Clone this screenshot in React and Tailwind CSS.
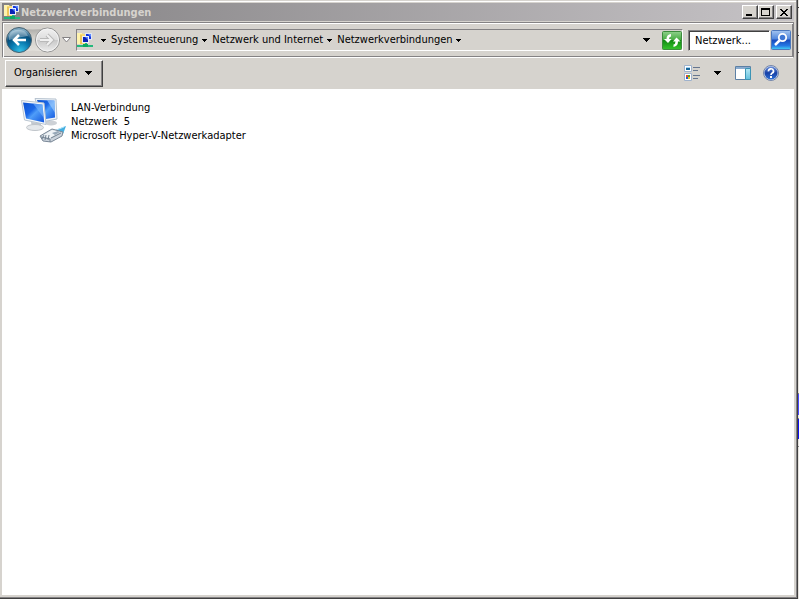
import { useState } from 'react';

const crumbs = ['Systemsteuerung', 'Netzwerk und Internet', 'Netzwerkverbindungen'];

const connections = [
  { name: 'LAN-Verbindung', network: 'Netzwerk  5', adapter: 'Microsoft Hyper-V-Netzwerkadapter' },
];

const SmallArrow = () => (
  <svg width="5" height="3" viewBox="0 0 5 3" shapeRendering="crispEdges" aria-hidden="true">
    <path d="M0 0h5v1H0zM1 1h3v1H1zM2 2h1v1H2z" />
  </svg>
);

const BigArrow = () => (
  <svg width="7" height="4" viewBox="0 0 7 4" shapeRendering="crispEdges" aria-hidden="true">
    <path d="M0 0h7v1H0zM1 1h5v1H1zM2 2h3v1H2zM3 3h1v1H3z" />
  </svg>
);

const NetworkFolderIcon = () => (
  <svg width="16" height="16" viewBox="0 0 16 16" className="shrink-0" aria-hidden="true">
    <path d="M0 1h5l1 1h3v10H0z" fill="#f8dc78" />
    <path d="M0 1h5v1H3v10H0z" fill="#fff3ae" />
    <path d="M3 3h2v9H3z" fill="#efc85a" />
    <path d="M8 1h7v7H8z" fill="#dfe6f7" />
    <path d="M9 2h5v5H9z" fill="#1636d8" />
    <path d="M5 4h7v7H5z" fill="#e8edfa" />
    <path d="M6 5h5v5H6z" fill="#0b22b4" />
    <path d="M8 5h3v3z" fill="#4f7dff" />
    <path d="M11 2h3v3z" fill="#5e8bff" />
    <path d="M8 11h2v2h6v2H0v-2h8z" fill="#25b87c" />
    <path d="M6 12h5v3H6z" fill="#0ca864" />
  </svg>
);

const NavButtonsBackdrop = () => (
  <svg width="56" height="28" viewBox="0 0 56 28" aria-hidden="true">
    <defs>
      <linearGradient id="plate" x2="0" y2="1">
        <stop stopColor="#aaa9a6" />
        <stop offset="0.4" stopColor="#d2d0ca" />
        <stop offset="1" stopColor="#e4e2dd" />
      </linearGradient>
      <radialGradient id="back" cx="0.55" cy="0.95" r="0.85">
        <stop stopColor="#36c2e8" />
        <stop offset="0.45" stopColor="#087ab0" />
        <stop offset="0.75" stopColor="#064e7c" />
        <stop offset="1" stopColor="#80abc4" />
      </radialGradient>
      <linearGradient id="forward" x2="0" y2="1">
        <stop stopColor="#f1f1f1" />
        <stop offset="0.48" stopColor="#dddddd" />
        <stop offset="0.52" stopColor="#c9c9c9" />
        <stop offset="1" stopColor="#ededed" />
      </linearGradient>
    </defs>
    <path d="M13 2q15 3 29 0a12 12 0 0 1 0 24q-14-3-29 0z" fill="url(#plate)" />
    <circle cx="14" cy="14" r="12.500" fill="url(#back)" stroke="#45606f" />
    <path d="M4 10a10 9 0 0 1 19 0q-9 1-19 4z" fill="#fff" opacity="0.35" />
    <path d="M21 14H9M14 9l-5 5 5 5" fill="none" stroke="#fff" strokeWidth="2.500" />
    <circle cx="42.500" cy="14" r="12" fill="url(#forward)" stroke="#929292" />
    <circle cx="42.500" cy="14" r="11" fill="none" stroke="#f4f4f4" />
    <path d="M35 14h12M42 9l5 5-5 5" fill="none" stroke="#b9b9b9" strokeWidth="4" />
    <path d="M35 14h12M42 9l5 5-5 5" fill="none" stroke="#f0f0f0" strokeWidth="2" />
  </svg>
);

const RefreshIcon = () => (
  <svg width="20" height="19" viewBox="0 0 20 19" aria-hidden="true">
    <defs>
      <linearGradient id="green" x2="0" y2="1">
        <stop stopColor="#8fd08b" />
        <stop offset="0.45" stopColor="#48ad43" />
        <stop offset="0.5" stopColor="#128b13" />
        <stop offset="1" stopColor="#35c52c" />
      </linearGradient>
    </defs>
    <rect x="0.500" y="0.500" width="19" height="18" rx="1" fill="url(#green)" stroke="#3c8b3d" />
    <path d="M9 3v2.500Q7 5.500 7 8h2.500L6 12 2 8h2.500Q4.500 3.500 9 3z" fill="#fff" />
    <path d="M11.500 16v-2.500q2-.5 2-3H11L14.500 6.500l4 4H16q0 4.500-4.500 5.500z" fill="#fff" />
  </svg>
);

const SearchIcon = () => (
  <svg width="20" height="20" viewBox="0 0 20 20" aria-hidden="true">
    <defs>
      <linearGradient id="blue" x2="0" y2="1">
        <stop stopColor="#a5c5f0" />
        <stop offset="0.45" stopColor="#4f86dc" />
        <stop offset="0.5" stopColor="#1749bb" />
        <stop offset="0.8" stopColor="#2478e4" />
        <stop offset="1" stopColor="#45d5f5" />
      </linearGradient>
    </defs>
    <rect x="0.500" y="0.500" width="19" height="19" rx="1" fill="url(#blue)" stroke="#4c78bd" />
    <path d="M8.500 10.500L4 15" stroke="#fff" strokeWidth="2.500" />
    <circle cx="11.500" cy="7.500" r="3.700" fill="#3f77d4" stroke="#fff" strokeWidth="1.800" />
  </svg>
);

const ViewsIcon = () => (
  <svg width="16" height="16" viewBox="0 0 16 16" aria-hidden="true">
    <path d="M.5.5h7v6h-7zM.5 8.500h7v7h-7z" fill="#fff" stroke="#9fb2cc" />
    <path d="M2 2h4v1H2z" fill="#a7d4f3" />
    <path d="M2 3h4v2H2z" fill="#17679b" />
    <path d="M2 10h2v2H2z" fill="#e34d28" />
    <path d="M4 10h2v2H4z" fill="#43a63c" />
    <path d="M2 12h2v2H2z" fill="#2b58cf" />
    <path d="M4 12h2v2H4z" fill="#f2c21e" />
    <path d="M9 2h7v1H9zM9 5h5v1H9zM9 10h7v1H9zM9 13h5v1H9z" fill="#65758f" />
  </svg>
);

const PreviewPaneIcon = () => (
  <svg width="16" height="14" viewBox="0 0 16 14" aria-hidden="true">
    <defs>
      <linearGradient id="pane" x2="0" y2="1">
        <stop stopColor="#b6e9f6" />
        <stop offset="1" stopColor="#62bfdd" />
      </linearGradient>
    </defs>
    <path d="M.5.5h15v13H.5z" fill="#fff" stroke="#5d80a5" />
    <path d="M1 1h14v2H1z" fill="#8aabcf" />
    <path d="M10.500 2.500h5v11h-5z" fill="url(#pane)" stroke="#3c94b5" />
  </svg>
);

const HelpIcon = () => (
  <svg width="16" height="16" viewBox="0 0 16 16" aria-hidden="true">
    <defs>
      <linearGradient id="help" x2="0" y2="1">
        <stop stopColor="#6e92dc" />
        <stop offset="0.5" stopColor="#1740a6" />
        <stop offset="1" stopColor="#2d70d6" />
      </linearGradient>
    </defs>
    <circle cx="8" cy="8" r="7.500" fill="#c8d4ea" stroke="#7385a9" />
    <circle cx="8" cy="8" r="6.500" fill="url(#help)" />
    <path d="M5.500 6.300a2.500 2.300 0 1 1 3.700 1.800q-1.200.7-1.200 1.900" fill="none" stroke="#fff" strokeWidth="1.700" />
    <path d="M7 11h2v2H7z" fill="#fff" />
  </svg>
);

const ConnectionIcon = () => (
  <svg width="46" height="46" viewBox="0 0 46 46" className="shrink-0" aria-hidden="true">
    <defs>
      <linearGradient id="screen" x2="1" y2="1">
        <stop stopColor="#0b51d0" />
        <stop offset="0.4" stopColor="#1b68e8" />
        <stop offset="0.55" stopColor="#4f9df8" />
        <stop offset="1" stopColor="#1256df" />
      </linearGradient>
    </defs>
    <ellipse cx="30" cy="25" rx="6" ry="2.500" fill="#cdd1d6" />
    <path d="M14 .5L35 1l1 20-15 3z" fill="#eef3f8" stroke="#b6c2cf" />
    <path d="M16 2l17.500.500.500 17-12 2z" fill="url(#screen)" />
    <path d="M26 2.300l7.500.200.300 12z" fill="#9ccafc" opacity="0.7" />
    <path d="M10 24l10 1v5h-9z" fill="#c1c7ce" />
    <ellipse cx="14" cy="29.500" rx="8.500" ry="3" fill="#e5e8eb" stroke="#c0c5ca" />
    <path d="M.5 2.500L23 5l2 21.500L3.500 22z" fill="#f5f8fb" stroke="#b9c5d1" />
    <path d="M2 4.500L21.500 6.500l1.700 18L5 20.500z" fill="url(#screen)" />
    <path d="M12 5.500l9.500 1 1 13z" fill="#79b5fb" opacity="0.6" />
    <path d="M32 33l13-5-3 8-8 3z" fill="#43aee0" />
    <path d="M33 33l10-4" stroke="#b5e4f7" />
    <path d="M19 38l12-7 11 3-1 4-11 6-8-1z" fill="#cbd3dc" stroke="#7a8897" />
    <path d="M21 38l10-6 8 2-10 6z" fill="#eff3f6" />
    <path d="M20 39l9 2v3M23 37l-2 4M25 37l-1 5M28 37l-1 5M30 40l10-5" fill="none" stroke="#758493" />
    <path d="M31 35l6-2 2 1-5 3z" fill="#97a8b8" />
  </svg>
);

function WindowButton({ label, children }) {
  return (
    <button aria-label={label} className="flex h-[14px] w-4 items-center justify-center border border-t-white border-l-white border-r-[#404040] border-b-[#404040] bg-[#d6d3ce] shadow-[inset_-1px_-1px_0_#848284]">
      <svg width="10" height="9" viewBox="0 0 10 9" shapeRendering="crispEdges" aria-hidden="true">{children}</svg>
    </button>
  );
}

function TitleBar() {
  return (
    <header className="flex h-[18px] items-center bg-linear-to-r from-[#848284] to-[#c6c3c6] pr-0.5 pl-0.5">
      <NetworkFolderIcon />
      <h1 className="ml-px flex-1 truncate pt-0.5 text-[11px] font-bold text-[#d6d3ce]">Netzwerkverbindungen</h1>
      <div className="flex">
        <WindowButton label="Minimieren"><path d="M1 6h6v2H1z" /></WindowButton>
        <WindowButton label="Maximieren"><path d="M0 0h9v8H0zM1 2v5h7V2z" fillRule="evenodd" /></WindowButton>
        <div className="ml-0.5 flex">
          <WindowButton label="Schließen">
            <path d="M1 1h2v1H1zM7 1h2v1H7zM2 2h2v1H2zM6 2h2v1H6zM3 3h4v1H3zM4 4h2v1H4zM3 5h4v1H3zM2 6h2v1H2zM6 6h2v1H6zM1 7h2v1H1zM7 7h2v1H7z" />
          </WindowButton>
        </div>
      </div>
    </header>
  );
}

function AddressBar() {
  const [query, setQuery] = useState('Netzwerk...');

  return (
    <div className="mt-px flex h-9 items-center border border-[#848284] border-b-white pr-0.5 pl-0.5 shadow-[inset_1px_1px_0_#fff,inset_-1px_-1px_0_#848284]">
      <div className="relative h-7 w-14 shrink-0">
        <NavButtonsBackdrop />
        <div className="absolute inset-0 flex">
          <button aria-label="Zurück" className="flex-1 rounded-full" />
          <button aria-label="Vorwärts" className="flex-1 rounded-full" />
        </div>
      </div>
      <button aria-label="Zuletzt besuchte Seiten" className="mr-1 flex w-[11px] justify-center">
        <svg width="9" height="6" viewBox="0 0 9 6" aria-hidden="true">
          <path d="M.5.5h8l-4 4.500z" fill="#fff" stroke="#848284" />
        </svg>
      </button>
      <div className="flex h-[22px] min-w-0 flex-1 items-center border border-t-[#848284] border-l-[#848284] border-r-white border-b-white">
        <NetworkFolderIcon />
        <nav aria-label="Adresse" className="flex min-w-0 flex-1 items-center pl-[5px]">
          <button aria-label="Ordner" className="flex w-[11px] justify-center"><SmallArrow /></button>
          {crumbs.map(c => (
            <div key={c} className="flex items-center">
              <a href="#" className="pl-0.5 whitespace-nowrap">{c}</a>
              <button aria-label={`${c} öffnen`} className="flex w-3 justify-center"><SmallArrow /></button>
            </div>
          ))}
        </nav>
        <button aria-label="Verlauf" className="mr-2.5 flex w-3 justify-center"><BigArrow /></button>
        <button aria-label="Aktualisieren"><RefreshIcon /></button>
      </div>
      <input
        aria-label="Suchen"
        value={query}
        onChange={e => setQuery(e.target.value)}
        className="ml-[5px] h-[21px] w-[82px] border border-t-[#848284] border-l-[#848284] border-r-white border-b-[#d6d3ce] bg-white px-1.5 pt-px shadow-[inset_1px_1px_0_#404040] outline-none"
      />
      <button aria-label="Suche starten" className="ml-px"><SearchIcon /></button>
    </div>
  );
}

function Toolbar() {
  return (
    <div className="flex h-[31px] items-center pr-[15px] pb-px pl-[3px]">
      <button className="flex h-[27px] items-center gap-1.5 border border-t-white border-l-white border-r-[#404040] border-b-[#404040] px-2 shadow-[inset_-1px_-1px_0_#848284]">
        Organisieren
        <span className="flex w-[11px] justify-center"><BigArrow /></span>
      </button>
      <div className="ml-auto flex items-center">
        <button aria-label="Ansicht ändern"><ViewsIcon /></button>
        <button aria-label="Weitere Ansichten" className="mx-3 flex w-[11px] justify-center"><BigArrow /></button>
        <button aria-label="Vorschaufenster einblenden"><PreviewPaneIcon /></button>
        <button aria-label="Hilfe" className="ml-3"><HelpIcon /></button>
      </div>
    </div>
  );
}

export default function App() {
  return (
    <div className="flex h-screen bg-[#e6e3de] font-['DejaVu_Sans_Condensed','DejaVu_Sans',sans-serif] text-[11px] leading-[14px] text-black">
      <div className="flex min-w-0 flex-1 flex-col border-r border-b border-[#404040] bg-[#d6d3ce]">
        <div className="flex flex-1 flex-col border-r border-b border-[#848284] pr-0.5 pb-0.5 pl-0.5 shadow-[inset_0_1px_0_#d6d3ce,inset_0_2px_0_#fff]">
          <div className="h-[3px]" />
          <TitleBar />
          <AddressBar />
          <Toolbar />
          <main className="flex-1 bg-white pt-[9px] pl-[19px]">
            <ul>
              {connections.map(c => (
                <li key={c.name} className="flex items-start gap-1">
                  <ConnectionIcon />
                  <div className="pt-[3px] whitespace-pre">
                    <p>{c.name}</p>
                    <p>{c.network}</p>
                    <p>{c.adapter}</p>
                  </div>
                </li>
              ))}
            </ul>
          </main>
        </div>
      </div>

      {/* Sliver of the window behind */}
      <div className="flex w-px flex-col">
        <div className="h-2 border-b border-[#404040]" />
        <div className="h-7 border-b border-[#404040]" />
        <div className="h-[17px] border-b border-[#404040]" />
        <div className="h-[341px] border-b border-[#848284]" />
        <div className="h-[21px] bg-[#4a49ff]" />
        <div className="h-1 border-b border-[#848284]" />
        <div className="h-5 bg-[#1010ef]" />
        <div className="h-2 border-b border-[#848284]" />
      </div>
    </div>
  );
}
